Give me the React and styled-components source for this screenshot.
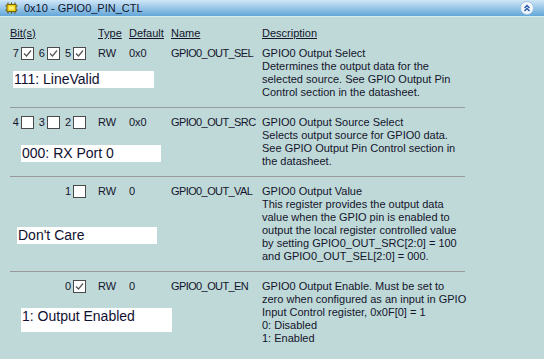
import React from "react"
import styled, { createGlobalStyle } from "styled-components"

const colors = {
  panel: "#bfd9d9",
  text: "#14142b",
  rule: "#9a9a9a",
  headTop: "#cfe6f7",
  headBottom: "#62a6d8"
}

const GlobalStyle = createGlobalStyle`
  html, body {
    margin: 0;
    padding: 0;
    background: ${colors.panel};
  }
  body {
    font-family: Tahoma, "Liberation Sans", Arial, sans-serif;
    font-size: 11px;
    color: ${colors.text};
  }
`

const fields = [
  {
    bits: [7, 6, 5],
    checked: [true, true, true],
    type: "RW",
    def: "0x0",
    name: "GPIO0_OUT_SEL",
    desc: [
      "GPIO0 Output Select",
      "Determines the output data for the",
      "selected source. See GPIO Output Pin",
      "Control section in the datasheet."
    ],
    value: "111: LineValid",
    valueTop: 11,
    valueLeft: 3,
    valueWidth: 141,
    valueHeight: 17
  },
  {
    bits: [4, 3, 2],
    checked: [false, false, false],
    type: "RW",
    def: "0x0",
    name: "GPIO0_OUT_SRC",
    desc: [
      "GPIO0 Output Source Select",
      "Selects output source for GPIO0 data.",
      "See GPIO Output Pin Control section in",
      "the datasheet."
    ],
    value: "000: RX Port 0",
    valueTop: 16,
    valueLeft: 11,
    valueWidth: 140,
    valueHeight: 17
  },
  {
    bits: [1],
    checked: [false],
    type: "RW",
    def: "0",
    name: "GPIO0_OUT_VAL",
    desc: [
      "GPIO0 Output Value",
      "This register provides the output data",
      "value when the GPIO pin is enabled to",
      "output the local register controlled value",
      "by setting GPIO0_OUT_SRC[2:0] = 100",
      "and GPIO0_OUT_SEL[2:0] = 000."
    ],
    value: "Don't Care",
    valueTop: 29,
    valueLeft: 7,
    valueWidth: 140,
    valueHeight: 17
  },
  {
    bits: [0],
    checked: [true],
    type: "RW",
    def: "0",
    name: "GPIO0_OUT_EN",
    desc: [
      "GPIO0 Output Enable. Must be set to",
      "zero when configured as an input in GPIO",
      "Input Control register, 0x0F[0] = 1",
      "0: Disabled",
      "1: Enabled"
    ],
    value: "1: Output Enabled",
    valueTop: 15,
    valueLeft: 11,
    valueWidth: 151,
    valueHeight: 24
  }
]

const ChipIcon = () => (
  <svg width="13" height="12" viewBox="0 0 13 12">
    <g stroke="#5a4a00" strokeWidth="1" fill="none">
      <line x1="3" y1="0.5" x2="3" y2="11.5" />
      <line x1="6.5" y1="0.5" x2="6.5" y2="11.5" />
      <line x1="10" y1="0.5" x2="10" y2="11.5" />
      <line x1="0.5" y1="4" x2="12.5" y2="4" />
      <line x1="0.5" y1="8" x2="12.5" y2="8" />
    </g>
    <rect x="2" y="2.5" width="9" height="7" fill="#f3d21a" stroke="#7a6400" />
    <rect x="4" y="4.5" width="5" height="3" fill="#fff27a" />
  </svg>
)

const CollapseButton = () => (
  <svg width="14" height="14" viewBox="0 0 14 14">
    <circle cx="7" cy="7" r="6.5" fill="#f4f8fc" stroke="#9cc2e0" />
    <polyline points="4.5,7 7,4.5 9.5,7" fill="none" stroke="#2a5aa8" strokeWidth="1.5" />
    <polyline points="4.5,10 7,7.5 9.5,10" fill="none" stroke="#2a5aa8" strokeWidth="1.5" />
  </svg>
)

const Check = ({ checked }) => (
  <Box>
    {checked && (
      <svg width="11" height="11" viewBox="0 0 11 11">
        <polyline points="2,5.5 4.5,8 9,2.5" fill="none" stroke="#555" strokeWidth="1.2" />
      </svg>
    )}
  </Box>
)

const App = () => (
  <>
    <GlobalStyle />
    <Panel>
      <TitleBar>
        <ChipIcon />
        <Title>0x10 - GPIO0_PIN_CTL</Title>
        <Collapse>
          <CollapseButton />
        </Collapse>
      </TitleBar>
      <Body>
        <HeadRow>
          <span>Bit(s)</span>
          <span>Type</span>
          <span>Default</span>
          <span>Name</span>
          <span>Description</span>
        </HeadRow>
        {fields.map((f, i) => (
          <FieldRow key={f.name} $first={i === 0} $last={i === fields.length - 1}>
            <Bits>
              {f.bits.map((b, j) => (
                <Bit key={b}>
                  <span>{b}</span>
                  <Check checked={f.checked[j]} />
                </Bit>
              ))}
            </Bits>
            <Cell>{f.type}</Cell>
            <Cell>{f.def}</Cell>
            <Name>{f.name}</Name>
            <Desc>
              {f.desc.map(line => (
                <div key={line}>{line}</div>
              ))}
            </Desc>
            <ValueBox
              $top={f.valueTop}
              $left={f.valueLeft}
              $width={f.valueWidth}
              $height={f.valueHeight}
            >
              {f.value}
            </ValueBox>
          </FieldRow>
        ))}
      </Body>
    </Panel>
  </>
)

const Panel = styled.main`
  width: 544px;
  height: 359px;
  overflow: hidden;
  background: ${colors.panel};
`

const TitleBar = styled.header`
  height: 16px;
  display: flex;
  align-items: center;
  padding-left: 5px;
  padding-right: 10px;
  background: linear-gradient(${colors.headTop}, ${colors.headBottom});
  border-bottom: 1px solid #d8ecf3;
`

const Title = styled.span`
  margin-left: 6px;
  line-height: 16px;
`

const Collapse = styled.span`
  margin-left: auto;
  display: flex;
`

const Body = styled.section`
  padding: 10px 0 0 10px;
`

const columns = "88px 31px 42px 91px 1fr"

const HeadRow = styled.div`
  display: grid;
  grid-template-columns: ${columns};
  line-height: 13px;
  span {
    text-decoration: underline;
  }
`

const FieldRow = styled.div`
  display: grid;
  grid-template-columns: ${columns};
  grid-template-rows: auto 1fr;
  width: 455px;
  line-height: 13px;
  padding-top: ${p => (p.$first ? 7 : 8)}px;
  padding-bottom: ${p => (p.$last ? 0 : 8)}px;
  border-bottom: ${p => (p.$last ? "none" : `1px solid ${colors.rule}`)};
`

const Bits = styled.div`
  display: flex;
  justify-content: flex-end;
  gap: 5px;
  padding-right: 12px;
  height: 13px;
`

const Bit = styled.span`
  display: flex;
  align-items: center;
  gap: 2px;
`

const Box = styled.span`
  box-sizing: border-box;
  width: 13px;
  height: 13px;
  background: #fff;
  border: 1px solid #4a4a4a;
  display: flex;
  align-items: center;
  justify-content: center;
`

const Cell = styled.span`
  white-space: nowrap;
`

const Name = styled(Cell)`
  letter-spacing: -0.6px;
`

const Desc = styled.div`
  grid-row: 1 / span 2;
  grid-column: 5;
  white-space: nowrap;
`

const ValueBox = styled.div`
  grid-row: 2;
  grid-column: 1 / span 4;
  align-self: start;
  box-sizing: border-box;
  width: ${p => p.$width}px;
  height: ${p => p.$height}px;
  margin-top: ${p => p.$top}px;
  margin-left: ${p => p.$left}px;
  padding-left: 1px;
  background: #fff;
  font-size: 14px;
  line-height: 17px;
  color: #101030;
  white-space: nowrap;
`

export default App
